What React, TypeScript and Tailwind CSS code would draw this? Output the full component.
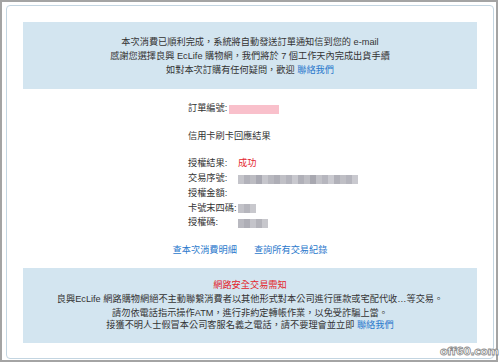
import React from 'react'

const FONT = "font-['Liberation_Sans','Noto_Sans_CJK_TC',sans-serif]"

// mottled grey blocks standing in for blurred values
function Blur({ shades }: { shades: string[] }) {
  return (
    <span className="inline-flex h-[9px] align-middle">
      {shades.map((c, i) => (
        <span key={i} className="h-full w-[6px]" style={{ background: c }} />
      ))}
    </span>
  )
}

const TXN = [
  '#c4c4ca', '#b2b2ba', '#bcbcc2', '#a9a9b2', '#c6c6cc', '#b8b8bf', '#aeaeb6', '#c0c0c6', '#b4b4bc', '#c8c8ce',
  '#b0b0b8', '#bebec4', '#a8a8b0', '#c2c2c8', '#b6b6be', '#cacad0', '#b1b1b9', '#bfbfc5', '#b5b5bd', '#c9c9cf',
]

function Row({ label, children }: { label: string; children?: React.ReactNode }) {
  return (
    <div className="flex h-[14.75px] items-center">
      <span className="w-[50px] shrink-0">{label}</span>
      {children}
    </div>
  )
}

export default function App() {
  return (
    <div className={`relative h-[364px] w-[500px] bg-white text-[9.2px] text-[#333] ${FONT}`}>
      <div className="h-[362px] w-[498px] border-2 border-[#a4a4a4] pl-[4px] pt-[3px]">
        <div className="w-[488px] rounded-[4px] border border-[#c3d5e1] px-[16px] pb-[15px] pt-[16px]">
          {/* order complete notice */}
          <div className="flex h-[67px] flex-col items-center bg-[#d3e5f0] pt-[13px] leading-[14px]">
            <p>本次消費已順利完成，系統將自動發送訂單通知信到您的 e-mail</p>
            <p>感謝您選擇良興 EcLife 購物網，我們將於 7 個工作天內完成出貨手續</p>
            <p>
              如對本次訂購有任何疑問，歡迎 <a className="text-[#2a78cc]">聯絡我們</a>
            </p>
          </div>

          {/* card result */}
          <div className="ml-[165px] pt-[13px]">
            <div className="flex h-[14px] items-center">
              <span>訂單編號:</span>
              <span className="ml-[2px] h-[9px] w-[50px] bg-[#f9c0cb]" />
            </div>
            <div className="mt-[13px] h-[14px] leading-[14px]">信用卡刷卡回應結果</div>
            <div className="mt-[14px]">
              <Row label="授權結果:">
                <span className="text-[#e3262c]">成功</span>
              </Row>
              <Row label="交易序號:">
                <Blur shades={TXN} />
              </Row>
              <Row label="授權金額:" />
              <Row label="卡號末四碼:">
                <Blur shades={['#c2c2c8', '#b6b6bd', '#c8c8cd']} />
              </Row>
              <Row label="授權碼:">
                <Blur shades={['#b9b9c0', '#aeaeb6', '#c4c4ca', '#b3b3ba', '#c7c7cc']} />
              </Row>
            </div>
          </div>

          <div className="mt-[12px] flex h-[14px] items-center justify-center gap-[17px] leading-[14px] text-[#2a78cc]">
            <a>查本次消費明細</a>
            <a>查詢所有交易紀錄</a>
          </div>

          {/* security notice */}
          <div className="mt-[11px] flex h-[75px] flex-col items-center bg-[#d3e5f0] pt-[10px]">
            <p className="leading-[14px] text-[#e3262c]">網路安全交易需知</p>
            <p className="leading-[14px]">良興EcLife 網路購物網絕不主動聯繫消費者以其他形式對本公司進行匯款或宅配代收…等交易。</p>
            <p className="mt-[1px] leading-[12px]">請勿依電話指示操作ATM，進行非約定轉帳作業，以免受詐騙上當。</p>
            <p className="leading-[12px]">
              接獲不明人士假冒本公司客服名義之電話，請不要理會並立即 <a className="text-[#2a78cc]">聯絡我們</a>
            </p>
          </div>
        </div>
      </div>

      {/* watermark */}
      <span className="absolute left-[440px] top-[346px] font-['DejaVu_Sans',sans-serif] text-[11px] font-bold leading-none tracking-[-0.4px] text-white [-webkit-text-stroke:0.8px_#8a8a8a]">
        off60.com
      </span>
    </div>
  )
}
